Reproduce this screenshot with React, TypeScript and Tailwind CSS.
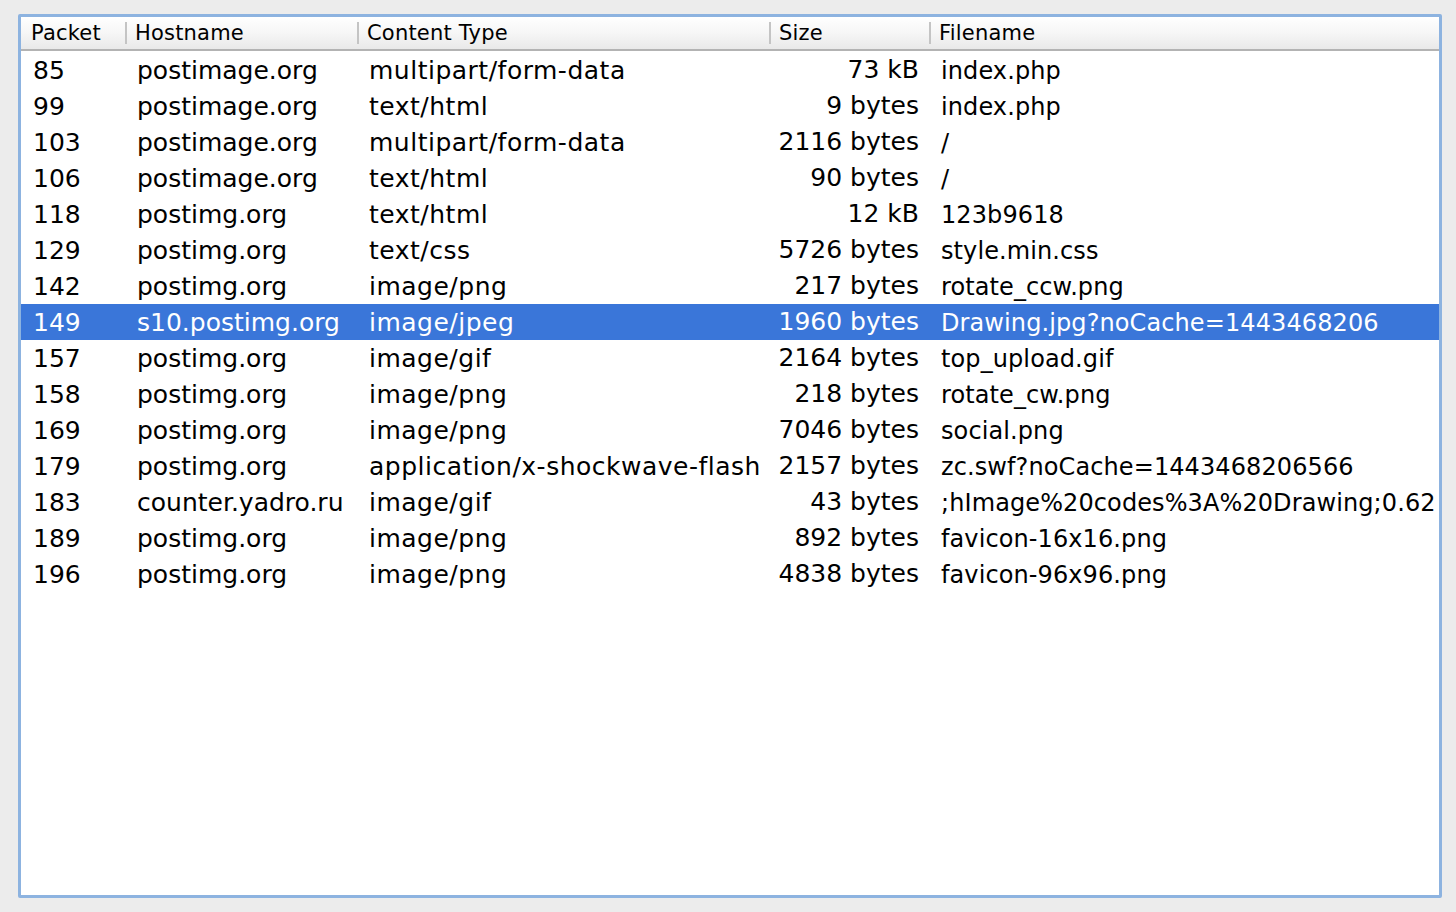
const rows: Array<[string, string, string, string, string]> = [
  ['85', 'postimage.org', 'multipart/form-data', '73 kB', 'index.php'],
  ['99', 'postimage.org', 'text/html', '9 bytes', 'index.php'],
  ['103', 'postimage.org', 'multipart/form-data', '2116 bytes', '/'],
  ['106', 'postimage.org', 'text/html', '90 bytes', '/'],
  ['118', 'postimg.org', 'text/html', '12 kB', '123b9618'],
  ['129', 'postimg.org', 'text/css', '5726 bytes', 'style.min.css'],
  ['142', 'postimg.org', 'image/png', '217 bytes', 'rotate_ccw.png'],
  ['149', 's10.postimg.org', 'image/jpeg', '1960 bytes', 'Drawing.jpg?noCache=1443468206'],
  ['157', 'postimg.org', 'image/gif', '2164 bytes', 'top_upload.gif'],
  ['158', 'postimg.org', 'image/png', '218 bytes', 'rotate_cw.png'],
  ['169', 'postimg.org', 'image/png', '7046 bytes', 'social.png'],
  ['179', 'postimg.org', 'application/x-shockwave-flash', '2157 bytes', 'zc.swf?noCache=1443468206566'],
  ['183', 'counter.yadro.ru', 'image/gif', '43 bytes', ';hImage%20codes%3A%20Drawing;0.62'],
  ['189', 'postimg.org', 'image/png', '892 bytes', 'favicon-16x16.png'],
  ['196', 'postimg.org', 'image/png', '4838 bytes', 'favicon-96x96.png'],
];

const SELECTED = '149';

function HeaderCell({ label, first }: { label: string; first?: boolean }) {
  return (
    <div className="flex items-center h-full overflow-hidden">
      {!first && <div className="w-[2px] h-[22px] bg-[#c4c4c4] shrink-0" />}
      <span className={`pt-[2px] ${first ? 'pl-[10px]' : 'pl-[8px]'}`}>{label}</span>
    </div>
  );
}

export default function App() {
  return (
    <div className="w-[1456px] h-[912px] bg-[#ececec] pt-[14px] pl-[18px]" style={{ fontFamily: '"DejaVu Sans", sans-serif' }}>
      <div className="w-[1424px] h-[884px] border-[3px] border-[#8db3e0] rounded-[2px] bg-white overflow-hidden flex flex-col">
        {/* Header */}
        <div className="h-[34px] shrink-0 grid grid-cols-[104px_232px_412px_160px_1fr] text-[21px] tracking-[0.2px] text-black bg-gradient-to-b from-white via-[#f6f6f6] to-[#e9e9e9] border-b-2 border-[#b3b3b3]">
          <HeaderCell label="Packet" first />
          <HeaderCell label="Hostname" />
          <HeaderCell label="Content Type" />
          <HeaderCell label="Size" />
          <HeaderCell label="Filename" />
        </div>

        {/* Rows */}
        <div className="flex flex-col pt-px">
          {rows.map(([packet, host, type, size, file]) => {
            const sel = packet === SELECTED;
            return (
              <div
                key={packet}
                className={`h-[36px] grid grid-cols-[104px_232px_412px_160px_1fr] items-center text-[25px] whitespace-nowrap ${
                  sel ? 'bg-[#3a76d9] text-white' : 'text-black'
                }`}
              >
                <span className="pl-[12px]">{packet}</span>
                <span className="pl-[12px] overflow-hidden">{host}</span>
                <span className="pl-[12px] tracking-[0.5px] overflow-hidden">{type}</span>
                <span className="pr-[10px] text-right -mt-[3px]">{size}</span>
                <span className="pl-[12px] text-[24px] tracking-[0.1px] overflow-hidden">{file}</span>
              </div>
            );
          })}
        </div>
      </div>
    </div>
  );
}
